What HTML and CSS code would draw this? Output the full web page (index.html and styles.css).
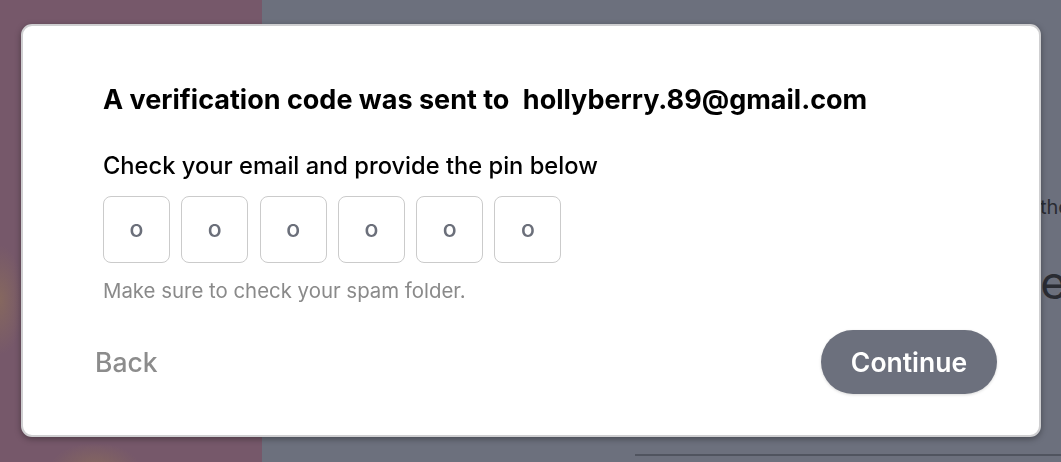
FILE: index.html
```html
<!DOCTYPE html>
<html lang="en">
<head>
<meta charset="utf-8">
<title>Verification</title>
<link rel="stylesheet" href="styles.css">
</head>
<body>
<div class="page">
  <div class="left-panel"></div>
  <div class="right-panel">
    <div class="bg-text small">the</div>
    <div class="bg-text big">e</div>
    <div class="bg-rule"></div>
  </div>
</div>
<div class="overlay">
  <div class="modal">
    <div class="body">
      <h1 class="title">A verification code was sent to <span class="email">hollyberry.89@gmail.com</span></h1>
      <p class="subtitle">Check your email and provide the pin below</p>
      <div class="pins">
        <div class="pin">o</div>
        <div class="pin">o</div>
        <div class="pin">o</div>
        <div class="pin">o</div>
        <div class="pin">o</div>
        <div class="pin">o</div>
      </div>
      <p class="hint">Make sure to check your spam folder.</p>
    </div>
    <div class="footer">
      <button class="btn-back">Back</button>
      <button class="btn-continue">Continue</button>
    </div>
  </div>
</div>
</body>
</html>
```

FILE: styles.css
```css
* { box-sizing: border-box; }
html, body {
  margin: 0;
  width: 1061px;
  height: 462px;
  overflow: hidden;
  font-family: Inter, "Noto Sans", sans-serif;
}
.page {
  display: grid;
  grid-template-columns: 262px 1fr;
  height: 462px;
}
.left-panel {
  background:
    radial-gradient(ellipse 24px 55px at 0px 300px, rgba(170,140,70,0.3), rgba(170,140,70,0) 100%),
    radial-gradient(ellipse 45px 25px at 95px 468px, rgba(170,140,70,0.3), rgba(170,140,70,0) 100%),
    #76586a;
}
.right-panel {
  background: #6c707d;
  display: flex;
  flex-direction: column;
  align-items: flex-end;
  padding-top: 193px;
  overflow: hidden;
  position: relative;
}
.bg-text {
  color: #2a2c33;
  white-space: nowrap;
}
.bg-text.small { font-size: 20px; line-height: 28px; margin-right: -9px; }
.bg-text.big { font-size: 46px; line-height: 56px; margin-top: 33px; margin-right: -6px; }
.bg-rule {
  position: absolute;
  left: 373px;
  right: 0;
  top: 454px;
  height: 2px;
  background: #50545f;
}
.overlay {
  position: fixed;
  inset: 0;
  padding: 24px 20px 25px 21px;
  display: flex;
}
.modal {
  flex: 1;
  background: #fff;
  border: 2px solid #cfcfd1;
  border-radius: 11px;
  box-shadow: 0 2px 6px rgba(0,0,0,0.35);
  display: flex;
  flex-direction: column;
  justify-content: space-between;
}
.body {
  padding: 58px 80px 0 80px;
}
.title {
  margin: 0;
  font-size: 27px;
  font-weight: 700;
  color: #000;
  line-height: 32px;
  white-space: nowrap;
}
.email { margin-left: 7px; }
.subtitle {
  margin: 35px 0 0;
  font-size: 23.7px;
  font-weight: 500;
  color: #000;
  line-height: 30px;
}
.pins {
  display: flex;
  gap: 11.3px;
  margin-top: 15px;
}
.pin {
  width: 67px;
  height: 67px;
  border: 1.5px solid #cbcbcb;
  border-radius: 8px;
  display: flex;
  align-items: center;
  justify-content: center;
  font-size: 23px;
  font-weight: 500;
  color: #6b6f7a;
  padding-bottom: 2px;
}
.hint {
  margin: 16px 0 0;
  font-size: 20.4px;
  color: #8a8a8a;
  line-height: 24px;
}
.footer {
  display: flex;
  justify-content: space-between;
  align-items: center;
  padding: 0 42px 41px 64px;
}
.btn-back {
  border: 0;
  background: none;
  font-family: inherit;
  font-size: 26.5px;
  font-weight: 500;
  color: #8c8c8c;
  padding: 8px 8px;
}
.btn-continue {
  border: 0;
  width: 176px;
  height: 64px;
  border-radius: 32px;
  background: #6c707d;
  color: #fff;
  font-family: inherit;
  font-size: 26.5px;
  font-weight: 600;
  box-shadow: 0 1px 3px rgba(0,0,0,0.15);
}
```
